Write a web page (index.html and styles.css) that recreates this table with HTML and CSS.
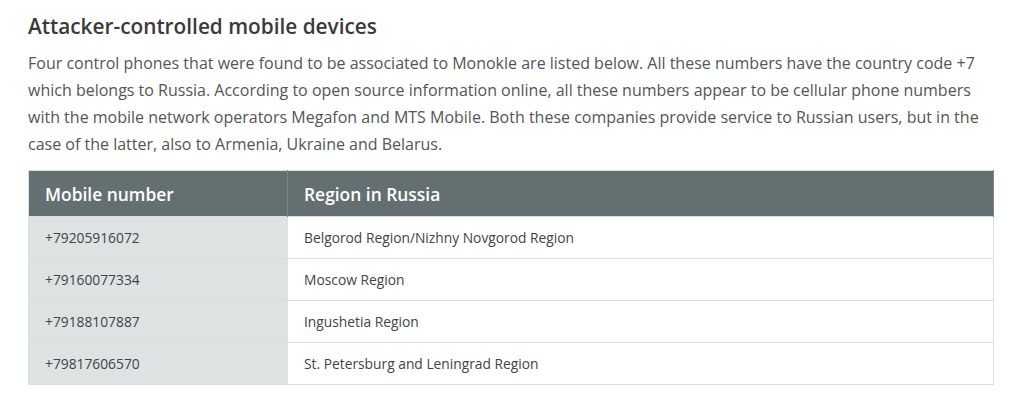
FILE: index.html
```html
<!DOCTYPE html>
<html>
<head>
<meta charset="utf-8">
<link rel="stylesheet" href="styles.css">
</head>
<body>
<div class="content">
  <h2 class="title">Attacker-controlled mobile devices</h2>
  <p class="intro">Four control phones that were found to be associated to Monokle are listed below. All these numbers have the country code +7 which belongs to Russia. According to open source information online, all these numbers appear to be cellular phone numbers with the mobile network operators Megafon and MTS Mobile. Both these companies provide service to Russian users, but in the case of the latter, also to Armenia, Ukraine and Belarus.</p>
  <table class="phones">
    <thead>
      <tr><th class="col-num">Mobile number</th><th>Region in Russia</th></tr>
    </thead>
    <tbody>
      <tr><td class="col-num">+79205916072</td><td>Belgorod Region/Nizhny Novgorod Region</td></tr>
      <tr><td class="col-num">+79160077334</td><td>Moscow Region</td></tr>
      <tr><td class="col-num">+79188107887</td><td>Ingushetia Region</td></tr>
      <tr><td class="col-num">+79817606570</td><td>St. Petersburg and Leningrad Region</td></tr>
    </tbody>
  </table>
</div>
</body>
</html>
```
FILE: styles.css
```css
html, body {
  margin: 0;
  padding: 0;
  background: #ffffff;
}
body {
  font-family: "Open Sans", "Noto Sans", "Liberation Sans", sans-serif;
  color: #4a4a4a;
}
.content {
  width: 966px;
  padding: 13px 0 0 28px;
}
.title {
  margin: 0;
  font-size: 20.8px;
  line-height: 26px;
  font-weight: 600;
  color: #3a3a3a;
}
.intro {
  margin: 11px 0 0 0;
  font-size: 16px;
  line-height: 27px;
  color: #555555;
}
.phones {
  margin-top: 12px;
  width: 966px;
  border-collapse: collapse;
  border: 1px solid #dcdfe0;
}
.phones th {
  background: #646f72;
  color: #ffffff;
  font-size: 17.4px;
  font-weight: 600;
  text-align: left;
  height: 45px;
  padding: 0 16px;
  border-right: 1px solid #7d878a;
}
.phones td {
  font-size: 13.8px;
  color: #444444;
  height: 41px;
  padding: 0 16px;
  border-top: 1px solid #dcdfe0;
  border-right: 1px solid #dcdfe0;
}
.phones .col-num {
  width: 226px;
}
.phones td.col-num {
  background: #dde2e3;
}
```
